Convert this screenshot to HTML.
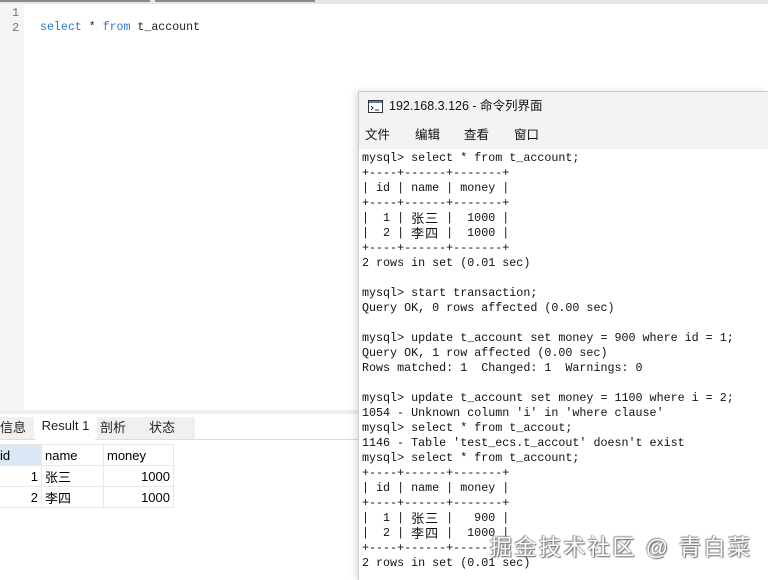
<!DOCTYPE html>
<html><head><meta charset="utf-8"><style>
body{margin:0;width:768px;height:579px;overflow:hidden;background:#fff;position:relative;font-family:"Liberation Sans","Noto Sans CJK SC",sans-serif}
.top{position:absolute;left:0;top:0;width:768px;height:4px;background:#e6e6e6}
.top i{position:absolute;top:0;height:2px;background:#8a8a8a}
.gut{position:absolute;left:0;top:4px;width:24px;height:406px;background:#f5f5f5}
.ln{position:absolute;left:12px;font:12px "Liberation Mono",monospace;color:#777}
.code{position:absolute;left:40px;top:21px;font:11.6px "Liberation Mono",monospace;color:#222}
.kw{color:#1f7ad8}
.sep{position:absolute;left:0;top:410px;width:358px;height:4px;background:#eee}
.tabs{position:absolute;left:0;top:415px;width:358px;height:24px;border-bottom:1px solid #ddd}
.tab{position:absolute;top:2px;height:22px;font-size:13px;line-height:22px;background:#f0f0f0;color:#222}
table{position:absolute;left:-4px;top:444px;border-collapse:collapse;font-size:13px}
td{border:1px solid #e8e8e8;height:21px;padding:0 3px;box-sizing:border-box}
.term{position:absolute;left:358px;top:91px;width:410px;height:488px;background:#fff;border-left:1px solid #ccc;border-top:1px solid #ccc;box-shadow:-3px 0 6px rgba(0,0,0,.12)}
.tb{height:29px;background:#f3f3f3;font-size:12.5px;line-height:29px;padding-left:30px;position:relative;color:#111}
.menu{height:28px;background:#f3f3f3;font-size:12.5px;line-height:28px;color:#111}
.menu span{position:absolute}
pre{margin:0;padding:2px 0 0 3px;font:11.7px/15px "Liberation Mono",monospace;color:#111}
pre b{display:inline-block;width:14px;height:15px;overflow:hidden;vertical-align:top;font-weight:normal;font-family:"Noto Sans CJK SC",sans-serif;font-size:13px;line-height:13px}
.wm{position:absolute;left:490px;top:530px;font-size:22px;color:#fff;text-shadow:1px 1px 1px #777,-1px -1px 1px #999,0 0 2px #555;letter-spacing:2.5px;white-space:nowrap}
</style></head><body>
<div class="top"><i style="left:0;width:150px"></i><i style="left:155px;width:160px"></i></div>
<div class="gut"></div>
<div class="ln" style="top:6px">1</div><div class="ln" style="top:21px">2</div>
<div class="code"><span class="kw">select</span> * <span class="kw">from</span> t_account</div>
<div class="sep"></div>
<div class="tabs">
<div class="tab" style="left:0;width:34px;background:#f0f0f0">信息</div>
<div class="tab" style="left:36px;width:59px;top:0;height:25px;background:#fff;text-align:center">Result 1</div>
<div class="tab" style="left:97px;width:42px;padding-left:3px">剖析</div>
<div class="tab" style="left:142px;width:46px;padding-left:7px">状态</div>
</div>
<table>
<tr><td style="width:45px;background:#dbe8f6">id</td><td style="width:62px">name</td><td style="width:70px">money</td></tr>
<tr><td style="text-align:right">1</td><td>张三</td><td style="text-align:right">1000</td></tr>
<tr><td style="text-align:right">2</td><td>李四</td><td style="text-align:right">1000</td></tr>
</table>
<div class="term">
<div class="tb"><svg style="position:absolute;left:9px;top:8px" width="15" height="13"><rect x=".5" y=".5" width="14" height="12" fill="#fff" stroke="#333"/><rect x="1" y="1" width="13" height="2" fill="#4a7fc0"/><path d="M3 6l2 2-2 2M7 10h4" stroke="#333" fill="none"/></svg>192.168.3.126 - 命令列界面</div>
<div class="menu"><span style="left:6px">文件</span><span style="left:56px">编辑</span><span style="left:105px">查看</span><span style="left:155px">窗口</span></div>
<pre>mysql&gt; select * from t_account;
+----+------+-------+
| id | name | money |
+----+------+-------+
|  1 | <b>张</b><b>三</b> |  1000 |
|  2 | <b>李</b><b>四</b> |  1000 |
+----+------+-------+
2 rows in set (0.01 sec)

mysql&gt; start transaction;
Query OK, 0 rows affected (0.00 sec)

mysql&gt; update t_account set money = 900 where id = 1;
Query OK, 1 row affected (0.00 sec)
Rows matched: 1  Changed: 1  Warnings: 0

mysql&gt; update t_account set money = 1100 where i = 2;
1054 - Unknown column 'i' in 'where clause'
mysql&gt; select * from t_accout;
1146 - Table 'test_ecs.t_accout' doesn't exist
mysql&gt; select * from t_account;
+----+------+-------+
| id | name | money |
+----+------+-------+
|  1 | <b>张</b><b>三</b> |   900 |
|  2 | <b>李</b><b>四</b> |  1000 |
+----+------+-------+
2 rows in set (0.01 sec)</pre>
</div>
<div class="wm">掘金技术社区 @ 青白菜</div>
</body></html>
